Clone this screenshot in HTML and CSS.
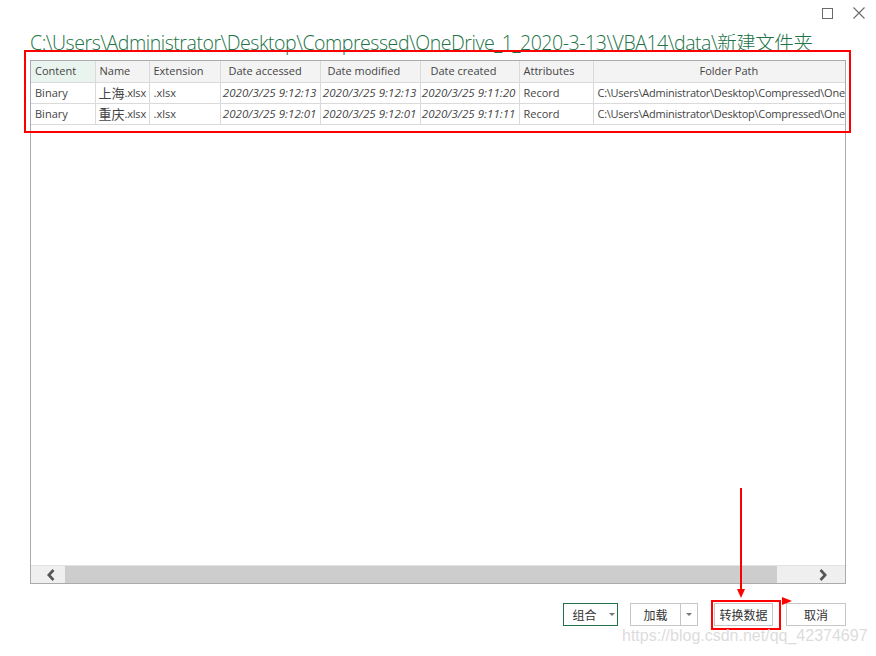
FILE: index.html
```html
<!DOCTYPE html>
<html lang="zh-CN">
<head>
<meta charset="utf-8">
<title>Navigator</title>
<link rel="stylesheet" href="styles.css">
</head>
<body>
<div class="window">
  <div class="titlebar">
    <svg class="ctl max" width="11" height="11" viewBox="0 0 11 11"><rect x="0.5" y="0.5" width="10" height="10" fill="none" stroke="#6a6a6a" stroke-width="1"/></svg>
    <svg class="ctl close" width="12" height="12" viewBox="0 0 12 12"><path d="M0.5 0.5 L11.5 11.5 M11.5 0.5 L0.5 11.5" stroke="#6a6a6a" stroke-width="1.1" fill="none"/></svg>
  </div>
  <h1 class="path">C:\Users\Administrator\Desktop\Compressed\OneDrive_1_2020-3-13\VBA14\data\新建文件夹</h1>
  <div class="panel">
    <div class="grid-wrap">
      <table class="grid">
        <colgroup>
          <col class="c-content"><col class="c-name"><col class="c-ext"><col class="c-date"><col class="c-date"><col class="c-created"><col class="c-attr"><col class="c-path">
        </colgroup>
        <thead>
          <tr>
            <th class="sel">Content</th>
            <th>Name</th>
            <th>Extension</th>
            <th class="h-acc">Date accessed</th>
            <th class="h-mod">Date modified</th>
            <th class="h-cre">Date created</th>
            <th>Attributes</th>
            <th class="h-path">Folder Path</th>
          </tr>
        </thead>
        <tbody>
          <tr>
            <td>Binary</td>
            <td class="nm"><span class="cjk">上海</span>.xlsx</td>
            <td>.xlsx</td>
            <td class="dt">2020/3/25 9:12:13</td>
            <td class="dt">2020/3/25 9:12:13</td>
            <td class="dt">2020/3/25 9:11:20</td>
            <td>Record</td>
            <td class="fp">C:\Users\Administrator\Desktop\Compressed\OneD</td>
          </tr>
          <tr>
            <td>Binary</td>
            <td class="nm"><span class="cjk">重庆</span>.xlsx</td>
            <td>.xlsx</td>
            <td class="dt">2020/3/25 9:12:01</td>
            <td class="dt">2020/3/25 9:12:01</td>
            <td class="dt">2020/3/25 9:11:11</td>
            <td>Record</td>
            <td class="fp">C:\Users\Administrator\Desktop\Compressed\OneD</td>
          </tr>
        </tbody>
      </table>
    </div>
    <div class="hscroll">
      <span class="sb-btn sb-left"><svg width="10" height="12" viewBox="0 0 10 12"><path d="M7.5 1 L2.8 6 L7.5 11" stroke="#555" stroke-width="2.6" fill="none"/></svg></span>
      <span class="sb-thumb"></span>
      <span class="sb-btn sb-right"><svg width="10" height="12" viewBox="0 0 10 12"><path d="M2.5 1 L7.2 6 L2.5 11" stroke="#555" stroke-width="2.6" fill="none"/></svg></span>
    </div>
  </div>
  <div class="footer">
    <button class="btn btn-combine">组合<span class="caret"></span></button>
    <div class="split">
      <button class="btn split-main">加载</button>
      <button class="btn split-drop"><span class="caret"></span></button>
    </div>
    <button class="btn btn-transform">转换数据</button>
    <button class="btn btn-cancel">取消</button>
  </div>
</div>

<div class="mark mark-table"></div>
<div class="mark mark-btn"></div>
<div class="arrow-line"></div>
<div class="arrow-head"></div>
<div class="arrow-flag"></div>
<div class="watermark">https://blog.csdn.net/qq_42374697</div>
</body>
</html>
```

FILE: styles.css
```css
* { box-sizing: border-box; }
html, body { margin: 0; padding: 0; background: #fff; }
body {
  width: 876px;
  height: 656px;
  position: relative;
  overflow: hidden;
  font-family: "Open Sans", "Noto Sans", "Noto Sans CJK SC", sans-serif;
  color: #333;
}
.window { display: flex; flex-direction: column; height: 656px; }

.titlebar {
  height: 26px;
  display: flex;
  justify-content: flex-end;
  align-items: flex-start;
  padding-right: 11px;
}
.ctl { display: block; }
.max { margin-top: 8px; margin-right: 20px; }
.close { margin-top: 7px; }

.path {
  margin: 0;
  padding-left: 30px;
  height: 34px;
  line-height: 33px;
  font-size: 19.5px;
  font-weight: 300;
  color: #217346;
  white-space: nowrap;
  letter-spacing: -0.45px;
  font-family: "Open Sans", "Noto Sans CJK SC", sans-serif;
}

.panel {
  margin: 0 30px;
  height: 524px;
  border: 1px solid #ababab;
  display: flex;
  flex-direction: column;
}
.grid-wrap { flex: 1; overflow: hidden; }
.grid {
  border-collapse: collapse;
  table-layout: fixed;
  width: 815px;
  font-size: 11px;
  color: #444;
}
.c-content { width: 64px; }
.c-name { width: 54px; }
.c-ext { width: 71px; }
.c-date { width: 100px; }
.c-created { width: 99px; }
.c-attr { width: 74px; }
.c-path { width: 253px; }

.grid th, .grid td {
  height: 21px;
  padding: 0 0 0 4px;
  border-right: 1px solid #dadada;
  border-bottom: 1px solid #dadada;
  text-align: left;
  font-weight: 400;
  white-space: nowrap;
  overflow: hidden;
  line-height: 20px;
}
.grid th:last-child, .grid td:last-child { border-right: none; }
.grid th { background: #f3f3f3; }
.grid th.sel { background: #e9f4ee; }
.grid th.h-acc { padding-left: 8px; }
.grid th.h-mod { padding-left: 7px; }
.grid th.h-cre { padding-left: 10px; }
.grid th.h-path { padding-left: 106px; }
.grid td.dt { font-style: italic; font-size: 11.5px; text-align: right; padding-right: 3px; padding-left: 0; letter-spacing: 0.05px; }
.grid td.fp { padding-left: 4px; letter-spacing: -0.25px; }
.grid td.nm { padding-left: 3px; letter-spacing: -0.2px; }
.cjk {
  font-family: "Noto Sans CJK SC", sans-serif;
  font-size: 13px;
  line-height: 20px;
  vertical-align: top;
  letter-spacing: 0;
}

.hscroll {
  height: 18px;
  border-top: 1px solid #e3e3e3;
  background: #efefef;
  display: flex;
  align-items: stretch;
}
.sb-btn { display: flex; align-items: center; }
.sb-left { width: 34px; justify-content: flex-end; padding-right: 9px; }
.sb-right { width: 68px; justify-content: flex-end; padding-right: 17px; }
.sb-thumb { flex: 1; background: #cdcdcd; }

.footer {
  display: flex;
  justify-content: flex-end;
  align-items: center;
  padding: 19px 30px 0 0;
}
.btn {
  height: 23px;
  margin: 0;
  padding: 0;
  border: 1px solid #c6c6c6;
  background: #fff;
  font-family: "Noto Sans CJK SC", sans-serif;
  font-size: 12px;
  color: #333;
  display: flex;
  align-items: center;
  justify-content: center;
}
.caret {
  width: 0; height: 0;
  border-left: 3px solid transparent;
  border-right: 3px solid transparent;
  border-top: 3px solid #777;
}
.btn-combine { width: 55px; border-color: #217346; gap: 12px; padding-left: 6px; margin-right: 12px; }
.split { display: flex; margin-right: 16px; }
.split-main { width: 51px; }
.split-drop { width: 17px; border-left: none; }
.btn-transform { width: 59px; margin-right: 13px; }
.btn-cancel { width: 60px; }

/* annotations drawn over the screenshot */
.mark { position: absolute; border: 2px solid #f00; }
.mark-table { left: 24px; top: 50px; width: 827px; height: 83px; }
.mark-btn { left: 711px; top: 600px; width: 70px; height: 30px; }
.arrow-line { position: absolute; left: 740px; top: 488px; width: 2px; height: 104px; background: #f00; }
.arrow-head {
  position: absolute; left: 737px; top: 589px;
  width: 0; height: 0;
  border-left: 4px solid transparent;
  border-right: 4px solid transparent;
  border-top: 9px solid #f00;
}
.arrow-flag {
  position: absolute; left: 782px; top: 597px;
  width: 0; height: 0;
  border-top: 4px solid transparent;
  border-bottom: 4px solid transparent;
  border-left: 10px solid #f00;
}
.watermark {
  position: absolute;
  left: 622px;
  top: 627px;
  font-family: "Liberation Sans", Arial, sans-serif;
  font-size: 16px;
  color: #dcdcdc;
  white-space: nowrap;
}
```
